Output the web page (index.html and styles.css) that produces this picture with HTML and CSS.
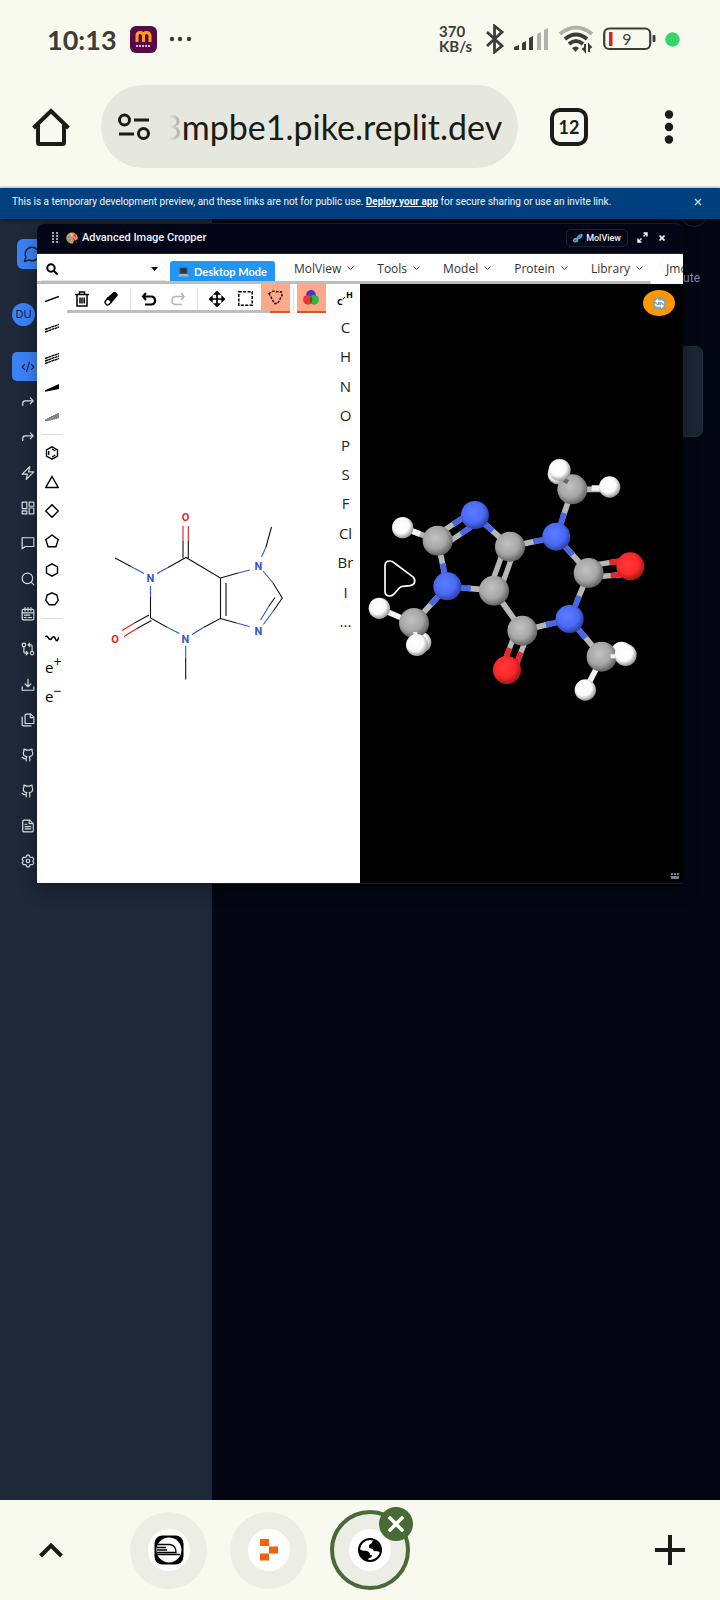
FILE: index.html
```html
<!DOCTYPE html>
<html lang="en">
<head>
<meta charset="utf-8">
<meta name="viewport" content="width=device-width">
<title>Advanced Image Cropper</title>
<link rel="stylesheet" href="styles.css">
</head>
<body>
<header class="chrome">
  <div class="status">
    <span class="clock">10:13</span>
    <svg class="app-icon" width="27" height="27" viewBox="0 0 27 27"><rect width="27" height="27" rx="6" fill="#570a45"/><path d="M7 16V9.500q0-3 3-3t3.500 3V16M13.500 9.500q0-3 3-3t3.500 3V16" fill="none" stroke="#ff9a1f" stroke-width="3"/><path d="M6 20h15" stroke="#d9b5d0" stroke-width="2" stroke-dasharray="2 1"/></svg>
    <svg width="24" height="6" viewBox="0 0 24 6" fill="#3c3d38"><circle cx="3" cy="3" r="2.200"/><circle cx="11" cy="3" r="2.200"/><circle cx="20" cy="3" r="2.200"/></svg>
    <div class="status-right">
      <span class="speed">370<br>KB/s</span>
      <svg width="20" height="30" viewBox="0 0 20 30" fill="none" stroke="#3c3d38" stroke-width="2.800"><path d="M2 8l15 14-7.500 6V2L17 8 2 22"/></svg>
      <svg width="35" height="24" viewBox="0 0 35 24"><g fill="#3c3d38"><path d="M0 23v-3l5-2v5zM8 23v-7l4-2v9zM15 23V11l4-2v14z"/></g><g fill="#b0b1ab"><path d="M23 23V7l4-2v18zM30 23V3l4-2v22z"/></g></svg>
      <svg width="36" height="30" viewBox="0 0 36 30" fill="none"><path d="M2 10Q18-3 34 10" stroke="#b0b1ab" stroke-width="4"/><path d="M7 15q11-9 22 0M11 20q7-6 14 0" stroke="#3c3d38" stroke-width="4"/><path d="M14 24q4-3 7 0l-3.500 4z" fill="#3c3d38"/><path d="M27 20v7l-2.500-3M31 28v-7l2.500 3" stroke="#3c3d38" stroke-width="2"/></svg>
      <svg width="53" height="24" viewBox="0 0 53 24"><rect x="1.200" y="1.500" width="46" height="20.500" rx="5" fill="none" stroke="#3c3d38" stroke-width="2.200"/><rect x="6" y="5" width="3.500" height="14" fill="#d3231e"/><rect x="49.500" y="8" width="3" height="7" rx="1" fill="#3c3d38"/><text x="24" y="18" text-anchor="middle" class="battery">9</text></svg>
      <svg width="15" height="15" viewBox="0 0 15 15"><circle cx="7.500" cy="7.500" r="7.200" fill="#37d36c"/></svg>
    </div>
  </div>
  <div class="toolbar">
    <button class="plain" aria-label="Home"><svg width="38" height="38" viewBox="0 0 38 38" fill="none" stroke="#1a1c17" stroke-width="4"><path d="M1.500 20L19 3l17.500 17M6 17v17.500q0 1.500 1.500 1.500h23q1.500 0 1.500-1.500V17"/></svg></button>
    <div class="address">
      <svg width="32" height="28" viewBox="0 0 32 28" fill="none" stroke="#1a1c17" stroke-width="3"><circle cx="6.500" cy="7" r="5"/><path d="M16 7h15M1 21h15"/><circle cx="25.500" cy="20.500" r="5"/></svg>
      <span class="url"><span class="faded">3</span>mpbe1.pike.replit.dev</span>
    </div>
    <button class="tabs">12</button>
    <button class="plain menu" aria-label="Menu"><svg width="10" height="34" viewBox="0 0 10 34" fill="#1a1c17"><circle cx="5" cy="4.500" r="4.200"/><circle cx="5" cy="17" r="4.200"/><circle cx="5" cy="29.500" r="4.200"/></svg></button>
  </div>
</header>

<div class="page">
  <div class="banner">
    <p>This is a temporary development preview, and these links are not for public use. <a href="#">Deploy your app</a> for secure sharing or use an invite link.</p>
    <button aria-label="Close banner"><svg width="8" height="8" viewBox="0 0 8 8" stroke="#d5e0ee" stroke-width="1.300"><path d="M1 1l6 6M7 1L1 7"/></svg></button>
  </div>
  <div class="shell">
    <aside class="sidebar">
      <div class="logo"><svg class="line" viewBox="0 0 24 24"><path d="M7.900 20A9 9 0 1 0 4 16.100L2 22Z"/></svg></div>
      <div class="avatar">DU</div>
      <nav>
        <button class="active" aria-label="Code"><svg class="line" viewBox="0 0 24 24"><path d="m18 16 4-4-4-4M6 8l-4 4 4 4M14.500 4l-5 16"/></svg></button>
        <button aria-label="Forward"><svg class="line" viewBox="0 0 24 24"><path d="m16 5 5 5-5 5M3 18v-4q0-4 4-4h14"/></svg></button>
        <button aria-label="Redo"><svg class="line" viewBox="0 0 24 24"><path d="m16 5 5 5-5 5M3 18v-4q0-4 4-4h14"/></svg></button>
        <button aria-label="Actions"><svg class="line" viewBox="0 0 24 24"><path d="M15 1L2 14h9l-2 9L22 10h-9z"/></svg></button>
        <button aria-label="Layout"><svg class="line" viewBox="0 0 24 24"><path d="M2 2h8v11H2zM14 2h8v7h-8zM14 12h8v10h-8zM2 17h8v5H2z"/></svg></button>
        <button aria-label="Messages"><svg class="line" viewBox="0 0 24 24"><path d="M2 3h20v15H7l-5 4z"/></svg></button>
        <button aria-label="Search"><svg class="line" viewBox="0 0 24 24"><circle cx="11" cy="11" r="9"/><path d="m22 22-4.500-4.500"/></svg></button>
        <button aria-label="Calendar"><svg class="line" viewBox="0 0 24 24"><rect x="2" y="4" width="20" height="18" rx="2"/><path d="M7 1v6M12 1v6M17 1v6M2 10h20M6 14h9M6 18h3M12 18h6"/></svg></button>
        <button aria-label="Compare"><svg class="line" viewBox="0 0 24 24"><circle cx="5" cy="5" r="3"/><circle cx="19" cy="19" r="3"/><path d="M12 5h5q2 0 2 2v9M15 2l-3 3 3 3M12 19H7q-2 0-2-2V8M9 16l3 3-3 3"/></svg></button>
        <button aria-label="Download"><svg class="line" viewBox="0 0 24 24"><path d="M2 15v6h20v-6M7 10l5 5 5-5M12 15V2"/></svg></button>
        <button aria-label="Copy"><svg class="line" viewBox="0 0 24 24"><path d="M9 2h8l5 5v11H7V4q0-2 2-2M16 2v6h6M2 7v13q0 2 2 2h13"/></svg></button>
        <button aria-label="GitHub"><svg class="line" viewBox="0 0 24 24"><path d="M15 22v-4a5 5 0 0 0-1-3.500c3 0 6-2 6-5.500a5 5 0 0 0-1-3.500V2c-2 0-4 1.500-4 1.500H9S7 2 5 2v3.500A5 5 0 0 0 4 9c0 3.500 3 5.500 6 5.500A5 5 0 0 0 9 18v4M9 18c-4.500 2-5-2-7-2"/></svg></button>
        <button aria-label="Repository"><svg class="line" viewBox="0 0 24 24"><path d="M15 22v-4a5 5 0 0 0-1-3.500c3 0 6-2 6-5.500a5 5 0 0 0-1-3.500V2c-2 0-4 1.500-4 1.500H9S7 2 5 2v3.500A5 5 0 0 0 4 9c0 3.500 3 5.500 6 5.500A5 5 0 0 0 9 18v4M9 18c-4.500 2-5-2-7-2"/></svg></button>
        <button aria-label="Document"><svg class="line" viewBox="0 0 24 24"><path d="M5 2h10l6 6v12q0 2-2 2H5q-2 0-2-2V4q0-2 2-2M14 2v6h7M7 13h10M7 17h10M7 9h3"/></svg></button>
        <button aria-label="Settings"><svg class="line" viewBox="0 0 24 24"><path d="M10 2h4l1 3 2 1 3-.5 2 3.500-2 3 2 3-2 3.500-3-.5-2 1-1 3h-4l-1-3-2-1-3 .5L2 15l2-3-2-3 2-3.500 3 .5 2-1z"/><circle cx="12" cy="12" r="3"/></svg></button>
      </nav>
    </aside>
    <main class="content">
      <span class="round"></span>
      <p>ute</p>
      <div class="card"></div>
    </main>
  </div>

  <section class="dialog">
    <div class="titlebar">
      <svg width="6" height="11" viewBox="0 0 6 11" fill="#9aa3b5"><path d="M0 0h2v2H0zM4 0h2v2H4zM0 3h2v2H0zM4 3h2v2H4zM0 6h2v2H0zM4 6h2v2H4zM0 9h2v2H0zM4 9h2v2H4z"/></svg>
      <svg width="12" height="12" viewBox="0 0 12 12"><path d="M6 .5C2.500.5.300 3 .3 6S3 11.500 6 11.500c2 0 1-2 2-3s3.700.3 3.700-2.500C11.700 2.800 9 .5 6 .5z" fill="#e0936a"/><circle cx="3" cy="5" r="1.200" fill="#3aa6e8"/><circle cx="5.500" cy="2.700" r="1.200" fill="#f4d03f"/><circle cx="8.800" cy="3.500" r="1.200" fill="#d63a3a"/><circle cx="3.500" cy="8.300" r="1.200" fill="#53ad4a"/><path d="M7 6l4 5" stroke="#7a4a2a"/></svg>
      <h1>Advanced Image Cropper</h1>
      <button class="mol-btn"><svg width="10" height="10" viewBox="0 0 10 10" fill="none" stroke-width="1.600"><path d="M.8 8.500Q.5 5 4 5.500T9.200 1.500" stroke="#b77be0"/><path d="M.8 8.500Q5 9.500 4.500 6T9.200 1.500M2 6l2 2M6 2.500l2 2" stroke="#30b9b8"/></svg>MolView</button>
      <button class="plain" aria-label="Expand"><svg width="11" height="11" viewBox="0 0 11 11" fill="none" stroke="#f1f5f9" stroke-width="1.400"><path d="M6.500 1H10v3.500M10 1L6.500 4.500M1 6.500V10h3.500M1 10l3.500-3.500"/></svg></button>
      <button class="plain" aria-label="Close"><svg width="6" height="6" viewBox="0 0 6 6" stroke="#f1f5f9" stroke-width="1.600"><path d="M.5.500l5 5M5.500.500l-5 5"/></svg></button>
    </div>
    <div class="menubar">
      <div class="search">
        <svg width="12" height="12" viewBox="0 0 12 12" fill="none" stroke="#000" stroke-width="2"><circle cx="5" cy="5" r="3.700"/><path d="M7.700 7.700L11.500 11.500"/></svg>
        <input type="text" aria-label="Search molecules">
        <svg width="7" height="4" viewBox="0 0 7 4"><path d="M0 0h7L3.500 4z"/></svg>
      </div>
      <button class="desktop"><svg width="11" height="10" viewBox="0 0 11 10"><path d="M1.500.500h8V7h-8z" fill="#4c5963"/><path d="M2.500 1.500h6V6h-6z" fill="#26353f"/><path d="M1.500 7h8L11 9.500H0z" fill="#a4b1b8"/></svg>Desktop Mode</button>
      <button class="item">MolView<svg width="7" height="5" viewBox="0 0 7 5"><path d="M.5.500l3 3 3-3"/></svg></button>
      <button class="item">Tools<svg width="7" height="5" viewBox="0 0 7 5"><path d="M.5.500l3 3 3-3"/></svg></button>
      <button class="item">Model<svg width="7" height="5" viewBox="0 0 7 5"><path d="M.5.500l3 3 3-3"/></svg></button>
      <button class="item">Protein<svg width="7" height="5" viewBox="0 0 7 5"><path d="M.5.500l3 3 3-3"/></svg></button>
      <button class="item">Library<svg width="7" height="5" viewBox="0 0 7 5"><path d="M.5.500l3 3 3-3"/></svg></button>
      <button class="item">Jmo</button>
    </div>
    <div class="menu-scroll"></div>
    <div class="panes">
      <div class="sketcher">
        <div class="left-tools">
          <div class="group five">
            <button aria-label="Single bond"><svg class="tool" viewBox="0 0 14 14"><path d="M0 9.500L14 4.500"/></svg></button>
            <button aria-label="Double bond"><svg class="tool" viewBox="0 0 14 14"><path d="M0 8.500L14 3.500M0 11L14 6" stroke-dasharray="3 .4"/></svg></button>
            <button aria-label="Triple bond"><svg class="tool" viewBox="0 0 14 14"><path d="M0 7.500L14 2.500M0 10L14 5M0 12.500L14 7.500" stroke-dasharray="3 .4"/></svg></button>
            <button aria-label="Wedge bond"><svg class="tool" viewBox="0 0 14 14"><path d="M0 10L13.500 4v3.500z" fill="#000"/></svg></button>
            <button aria-label="Hash bond"><svg class="tool" viewBox="0 0 14 14"><path d="M1 9v2M3 8v3M5 7v3.500M7 6v4M9 5v4.500M11 4v5M13 3v5.500" stroke="#555"/></svg></button>
          </div>
          <div class="group six">
            <button aria-label="Benzene"><svg class="tool" viewBox="0 0 14 14"><path d="M7 .8l5.500 3v6.400L7 13.200l-5.500-3V3.800zM7 3l3.500 2M3.700 5v4M10.300 9L7 11"/></svg></button>
            <button aria-label="Cyclopropane"><svg class="tool" viewBox="0 0 14 14"><path d="M7 1.500l6.200 11H.8z"/></svg></button>
            <button aria-label="Cyclobutane"><svg class="tool" viewBox="0 0 14 14"><path d="M7 .7L13.300 7 7 13.300.7 7z"/></svg></button>
            <button aria-label="Cyclopentane"><svg class="tool" viewBox="0 0 14 14"><path d="M7 1l6.200 4.600-2.300 7.200H3.100L.8 5.600z"/></svg></button>
            <button aria-label="Cyclohexane"><svg class="tool" viewBox="0 0 14 14"><path d="M7 .8l5.500 3v6.400L7 13.200l-5.500-3V3.800z"/></svg></button>
            <button aria-label="Cycloheptane"><svg class="tool" viewBox="0 0 14 14"><path d="M7 .8l4.900 2.300 1.300 5.300-3.400 4.400H4.200L.8 8.400l1.300-5.300z"/></svg></button>
          </div>
          <div class="group three">
            <button aria-label="Chain"><svg class="tool" viewBox="0 0 14 14"><path d="M0 6q2-2 3.500 1T7 7t3.500 1T14 6" stroke-width="1.600"/></svg></button>
            <button>e<sup>+</sup></button>
            <button>e<sup>−</sup></button>
          </div>
        </div>
        <div class="middle">
          <div class="top-tools">
            <button aria-label="Clear"><svg width="14" height="16" viewBox="0 0 14 16" fill="none" stroke="#000" stroke-width="1.500"><path d="M0 3.500h14M4.500 3V1h5v2M2 4v11h10V4M5 6.500v6M7 6.500v6M9.200 6.500v6"/></svg></button>
            <button aria-label="Erase"><svg width="14" height="14" viewBox="0 0 14 14" stroke="#000" stroke-width="1.500"><path d="M4 6l5.500-5q1-.5 2 0l1 1q1 1 0 2L7 10z" fill="#000"/><path d="M4 6l3.500 4L5 12.500q-1.500 1-2.500 0l-1-1q-1-1.500 0-2.500z" fill="#fff"/></svg></button>
            <i></i>
            <button aria-label="Undo"><svg width="16" height="14" viewBox="0 0 16 14" fill="none" stroke="#000" stroke-width="2.200"><path d="M5 1L2 4.500 5 8M2 4.500h8q4 0 4 4t-4 4H4"/></svg></button>
            <button aria-label="Redo edit"><svg width="16" height="14" viewBox="0 0 16 14" fill="none" stroke="#b5b5b5" stroke-width="1.600"><path d="M11 1l3 3.500L11 8M14 4.500H6q-4 0-4 4t4 4h6"/></svg></button>
            <i></i>
            <button aria-label="Move"><svg width="16" height="16" viewBox="0 0 16 16" stroke="#000" stroke-width="1.700"><path d="M8 2v12M2 8h12"/><path d="M8 .8l2 2H6zM8 15.200l2-2H6zM.8 8l2-2v4zM15.200 8l-2-2v4z"/></svg></button>
            <button aria-label="Rectangle select"><svg width="15" height="15" viewBox="0 0 15 15" fill="none" stroke="#000" stroke-width="1.500" stroke-dasharray="3 1.400"><rect x=".8" y=".8" width="13.400" height="13.400"/></svg></button>
            <button class="on" aria-label="Lasso select"><svg width="15" height="15" viewBox="0 0 15 15" fill="none" stroke="#000" stroke-width="1.400" stroke-dasharray="2.500 1.300"><path d="M1 3.500L5 1.200l8.500.8.500 3.500-4.500 8h-3z"/></svg></button>
            <i class="slim"></i>
            <button class="on" aria-label="Atom colors"><svg width="16" height="15" viewBox="0 0 16 15"><circle cx="8" cy="4.900" r="4.900" fill="#4a35c9"/><circle cx="5" cy="9.800" r="4.900" fill="#ee3333"/><circle cx="11" cy="9.800" r="4.900" fill="#32b83a"/><path d="M8 6q3 3.500 0 7.500-3-4 0-7.500z" fill="#654d20"/></svg></button>
          </div>
          <div class="tool-scroll"></div>
          <svg class="structure" viewBox="67 313 264 570" aria-label="Caffeine structure">
            <g fill="none" stroke="#111" stroke-width="1.100"><path d="M115 558l16 8.500M168 567.500l18-10 34.500 20.500v40.500l-17 9M220.500 578l17.500-5M226 583v33M220.500 618.500l16 4.500M150.500 597v21l17 9.500M185.700 658v21.500M266 547l5.500-20M273 583l9.300 15-9 13M275 597.500l-6 8.500M183 541v17M188.300 541v17M149 615l-14.500 8M151.500 620.500l-14.500 8"/></g>
            <g fill="none" stroke="#3355cc" stroke-width="1.100"><path d="M131 566.500l13 7M157 573.500l11-6M238 573l12-3M263 571l10 12M261.500 557l4.500-10M236.500 623l13 3.500M273.300 611l-10 13.500M269 606l-8.500 14M150.500 586v11M167.500 627.500l12 6M192 634.500l11.500-7M185.700 646v12"/></g>
            <g fill="none" stroke="#dd2222" stroke-width="1.100"><path d="M183 526v15M188.300 526v15M134.500 623l-12.500 7.500M137 628.500l-13 8"/></g>
            <g class="atoms"><text x="150.500" y="582">N</text><text x="258.500" y="570">N</text><text x="258.500" y="635">N</text><text x="185.500" y="643">N</text><g class="oxygen"><text x="185.500" y="521">O</text><text x="115" y="643">O</text></g></g>
          </svg>
        </div>
        <div class="elements">
          <button aria-label="Toggle hydrogens"><svg width="24" height="18" viewBox="0 0 24 18"><text x="3" y="16" class="ch">C</text><text x="12" y="9" class="ch">H</text><path d="M9 10l2-2" stroke="#000"/></svg></button>
          <div class="element-list">
            <button>C</button><button>H</button><button>N</button><button>O</button><button>P</button><button>S</button><button>F</button><button>Cl</button><button>Br</button><button>I</button><button>...</button>
          </div>
        </div>
      </div>
      <div class="viewer">
        <svg class="model" viewBox="360 284 323 599" aria-label="Caffeine model">
          <defs>
            <radialGradient id="c" cx=".42" cy=".4" r=".62"><stop offset="0" stop-color="#c2c2c2"/><stop offset=".6" stop-color="#a6a6a6"/><stop offset="1" stop-color="#5e5e5e"/></radialGradient>
            <radialGradient id="n" cx=".42" cy=".4" r=".62"><stop offset="0" stop-color="#5c7cff"/><stop offset=".6" stop-color="#4b6bf8"/><stop offset="1" stop-color="#2a40a0"/></radialGradient>
            <radialGradient id="o" cx=".42" cy=".4" r=".62"><stop offset="0" stop-color="#ff3838"/><stop offset=".6" stop-color="#fb2a2a"/><stop offset="1" stop-color="#a31515"/></radialGradient>
            <radialGradient id="h" cx=".42" cy=".4" r=".62"><stop offset="0" stop-color="#fff"/><stop offset=".6" stop-color="#fafafa"/><stop offset="1" stop-color="#909090"/></radialGradient>
          </defs>
          <g transform="translate(360 440) scale(.3333)">
            <g stroke-width="17" stroke="#b8b8b8"><path d="M345 225L450 320M233 302L262 439M262 439L402 452M450 320L589 290M589 290L637 148M589 290L686 399M686 399L629 537M629 537L487 572M487 572L402 452M629 537L725 650M262 439L162 549M637 148H749M233 302L128 263"/><path d="M223 290L335 216M246 320L358 244M438 312L390 444M465 326L418 458M686 378L811 358M686 412L811 402M472 565L426 683M506 576L460 698" stroke-width="16"/></g>
            <g stroke-width="17" stroke="#4867e6"><path d="M345 225L398 273M248 371L262 439L332 446M520 305L589 290L613 219M589 290L638 345M658 468L629 537L558 555M629 537L677 594M262 439L212 494"/><path d="M279 253L335 216M302 282L358 244" stroke-width="16"/></g>
            <g stroke-width="16" stroke="#e52929"><path d="M748 368L811 358M752 407L811 402M449 624L426 683M483 637L460 698"/></g>
            <g stroke="#f3f3f3" stroke-width="17"><path d="M695 144H749M180 282L128 263M58 505L125 534M676 750L708 688"/></g>
            <g fill="url(#h)"><circle cx="594" cy="102" r="31"/><circle cx="785" cy="637" r="32"/><circle cx="182" cy="607" r="32"/></g>
            <g fill="url(#c)"><circle cx="233" cy="302" r="45"/><circle cx="402" cy="452" r="45"/><circle cx="450" cy="320" r="45"/><circle cx="637" cy="148" r="45"/><circle cx="686" cy="399" r="45"/><circle cx="487" cy="572" r="45"/><circle cx="725" cy="650" r="45"/><circle cx="162" cy="549" r="45"/></g>
            <g fill="url(#n)"><circle cx="345" cy="225" r="42"/><circle cx="262" cy="439" r="42"/><circle cx="589" cy="290" r="42"/><circle cx="629" cy="537" r="42"/></g>
            <g fill="url(#o)"><circle cx="811" cy="379" r="42"/><circle cx="441" cy="690" r="42"/></g>
            <path d="M612 120l12 6" stroke="#666" stroke-width="14"/><path d="M752 649h22M166 576v14" stroke="#f3f3f3" stroke-width="12"/>
            <g fill="url(#h)"><circle cx="128" cy="263" r="32"/><circle cx="599" cy="90" r="33"/><circle cx="749" cy="141" r="32"/><circle cx="797" cy="645" r="33"/><circle cx="676" cy="750" r="32"/><circle cx="58" cy="505" r="32"/><circle cx="171" cy="615" r="33"/></g>
            <path d="M75 376q1-13 14-13 7 0 14 6l55 41q8 6 6 17-2 8-14 10l-22 2q-5 0-9 4l-18 20q-6 6-14 5-12-1-12-14z" fill="none" stroke="#fff" stroke-width="5"/>
          </g>
          <path d="M671 873h2v2h-2zM674 873h2v2h-2zM677 873h2v2h-2zM671 876h8v3h-8z" fill="#777e92"/>
        </svg>
        <button class="refresh" aria-label="Refresh"><svg width="13" height="13" viewBox="0 0 13 13"><rect width="13" height="13" rx="1" fill="#85a5b3"/><path d="M4 4.200h4.500q2 0 2 2.300M9 9H4.500q-2 0-2-2.300" fill="none" stroke="#fff" stroke-width="1.500"/><path d="M5 1.500v5.400L2 4.200zM8 6.300v5.400L11 9z" fill="#fff"/></svg></button>
      </div>
    </div>
  </section>
</div>

<footer class="bottom">
  <button class="plain" aria-label="Show tabs"><svg width="24" height="16" viewBox="0 0 24 16" fill="none" stroke="#1a1c17" stroke-width="4"><path d="M1.500 14L12 3.500 22.500 14"/></svg></button>
  <div class="tab-strip">
    <button class="tab" aria-label="Train tab"><span><svg width="30" height="30" viewBox="0 0 30 30"><rect x=".5" y=".5" width="29" height="29" rx="8"/><circle cx="15" cy="15" r="12.500" fill="#fff"/><path d="M4 9.500h12q6 1 6 8H3M3 12.500h9M3 15h10M3 19.500h23" fill="none" stroke="#000" stroke-width="1.300"/></svg></span></button>
    <button class="tab" aria-label="Replit tab"><span><svg width="18" height="22" viewBox="0 0 18 22" fill="#f26207"><path d="M0 0h9v7H0zM9 7.500h9v7H9zM0 14.500h9v7H0z"/></svg></span></button>
    <button class="tab current" aria-label="Current tab"><span><svg width="24" height="24" viewBox="0 0 24 24"><circle cx="12" cy="12" r="11" fill="#fff" stroke="#000" stroke-width="2"/><path d="M16 2q-2 1-2 3l-3 2v3l4 1q0 3 3 2l4 1q1-8-6-12zM1 11q3 2 8 2 3 1 3 4h2q0 3-3 3l-2 3Q1 20 1 11z"/></svg></span><b class="badge"><svg width="16" height="16" viewBox="0 0 16 16" stroke="#fff" stroke-width="3.600" stroke-linecap="round"><path d="M2 2l12 12M14 2L2 14"/></svg></b></button>
  </div>
  <button class="plain" aria-label="New tab"><svg width="30" height="30" viewBox="0 0 30 30" stroke="#1a1c17" stroke-width="4"><path d="M15 0v30M0 15h30"/></svg></button>
</footer>
</body>
</html>
```
FILE: styles.css
```css
* { box-sizing: border-box; }
body { margin: 0; min-height: 100vh; display: flex; flex-direction: column; background: #020713; font-family: Roboto, sans-serif; }
button { font: inherit; color: inherit; border: 0; padding: 0; margin: 0; background: none; }
svg { display: block; flex-shrink: 0; }
p, h1 { margin: 0; }
.plain { display: grid; place-items: center; }

.chrome { height: 188px; background: #f8faf0; border-bottom: 2px solid #dfe7de; color: #1a1c17; }
.status { display: flex; align-items: center; height: 78px; padding: 0 40px 0 47px; color: #3c3d38; }
.clock { font: 700 27px Lato, sans-serif; width: 83px; }
.app-icon { margin-right: 12px; }
.status-right { margin-left: auto; display: flex; align-items: center; gap: 9px; }
.speed { font: 700 15px/15px Lato, sans-serif; width: 37px; }
.battery { font: 400 16px Lato, sans-serif; fill: #3c3d38; }
.toolbar { display: flex; align-items: center; padding: 7px 46px 0 32px; }
.address { flex: 1; display: flex; align-items: center; height: 83px; margin: 0 32px 0 31px; padding: 0 16px 0 17px; border-radius: 42px; background: #e6e8df; overflow: hidden; }
.url { flex: 1; display: flex; justify-content: flex-end; margin-left: 12px; font: 400 34px/50px Lato, sans-serif; white-space: nowrap; }
.faded { color: transparent; background: linear-gradient(90deg, #e6e8df 35%, #a0a29b); background-clip: text; -webkit-background-clip: text; }
.tabs { width: 38px; height: 38px; border: 4px solid #1a1c17; border-radius: 10px; font: 700 18px Lato, sans-serif; }
.menu { margin-left: 76px; }

.page { position: relative; flex: 1; display: flex; flex-direction: column; }
.banner { display: flex; justify-content: space-between; height: 31px; padding: 0 18px 4px 12px; align-items: center; background: #00407f; color: #f1f6fb; box-shadow: 0 1px 3px #000a; z-index: 1; }
.banner p { font-size: 10px; white-space: nowrap; }
.banner a { color: inherit; font-weight: 700; }
.shell { flex: 1; display: flex; }
.sidebar { width: 212px; background: #1e2839; padding: 20px 0 0 12px; }
.logo { width: 60px; height: 30px; margin-left: 5px; border-radius: 6px; background: #3b82f6; color: #14233f; display: flex; align-items: center; padding-left: 6px; }
.avatar { width: 23px; height: 23px; margin: 34px 0 26px; border-radius: 50%; background: #3b82f6; color: #14233f; font: 11px/23px Inter, sans-serif; text-align: center; }
.line { width: 14px; height: 14px; fill: none; stroke: currentColor; stroke-width: 2; stroke-linejoin: round; stroke-linecap: round; }
.logo .line { width: 18px; height: 18px; }
nav { height: 524px; display: flex; flex-direction: column; justify-content: space-between; color: #e2e8f0; margin-right: 12px; }
nav button { height: 29px; padding-left: 9px; border-radius: 5px; }
nav .active { background: #3b82f6; color: #10203c; }
.content { flex: 1; display: flex; flex-direction: column; align-items: flex-end; color: #8791a3; font-size: 12px; padding-right: 17px; }
.round { width: 28px; height: 28px; margin: -20px -5px 0 0; border: 1px solid #1c2434; border-radius: 50%; }
.content p { margin: 44px 3px 0 0; }
.card { width: 400px; max-width: 100%; height: 91px; margin-top: 61px; border: 1px solid #222d3d; border-radius: 7px; background: #1c2534; }

.dialog { position: absolute; top: 35px; left: 37px; right: 37px; display: flex; flex-direction: column; background: #020617; border: 1px solid #151c2b; border-width: 1px 0; border-radius: 8px 8px 0 0; overflow: hidden; box-shadow: 0 6px 18px #0005; z-index: 2; }
.titlebar { display: flex; align-items: center; height: 30px; padding: 0 15px 2px 15px; color: #f1f5f9; border-bottom: 1px solid #1b2333; }
.titlebar h1 { font: 500 11px Roboto, sans-serif; margin: 0 auto 0 4px; }
.titlebar > svg:first-child { margin-right: 8px; }
.mol-btn { display: flex; align-items: center; gap: 3px; height: 18px; padding: 0 6px; margin-right: 0; border: 1px solid #1b2333; border-radius: 5px; font: 500 9px Roboto, sans-serif; }
.titlebar .plain { width: 12px; height: 12px; margin-left: 8px; }
.menubar { display: flex; align-items: center; height: 27px; background: #fff; color: #333; overflow: hidden; padding-left: 4px; }
.search { flex: none; display: flex; align-items: center; width: 125px; height: 27px; padding: 3px 8px 0 5px; border-bottom: 1px solid #e3e3e3; }
.search input { flex: 1; min-width: 0; border: 0; outline: 0; background: none; }
.desktop { flex: none; display: flex; align-items: center; justify-content: center; gap: 5px; width: 105px; height: 21px; margin: 8px 19px 0 4px; border-radius: 3px 3px 0 0; background: #2196f3; color: #fff; font: 700 11px Lato, sans-serif; }
.item { flex: none; display: flex; align-items: center; gap: 6px; margin: 2px 23px 0 0; font: 12px "Open Sans", sans-serif; }
.item svg { fill: none; stroke: #333; }
.menu-scroll { height: 3px; background: linear-gradient(#bdbdbd 0 0) 0 0 / 95% 100% no-repeat #fff; }
.panes { display: grid; grid-template-columns: 1fr 1fr; }
.sketcher { display: grid; grid-template-columns: 30px 1fr 29px; background: #fff; color: #000; }
.left-tools { padding: 0 4px; }
.group { display: grid; grid-auto-rows: 1fr; padding-left: 4px; font: 15px "Open Sans", sans-serif; }
.group + .group { border-top: 1px solid #ddd; }
.group button { display: flex; align-items: center; }
.group sup { font-size: 14px; line-height: 1; align-self: flex-start; padding-top: 3px; }
.five { height: 148px; margin-bottom: 2px; }
.six { height: 184px; padding-top: 3px; padding-bottom: 4px; }
.three { height: 92px; padding-top: 4px; }
.tool { width: 14px; height: 14px; fill: none; stroke: #000; stroke-width: 1.4; }
.middle { min-width: 0; display: flex; flex-direction: column; }
.top-tools { display: flex; height: 26px; padding-right: 5px; }
.top-tools button { flex: 1 1 0; height: 29px; display: grid; place-items: center; }
.top-tools .on { background: #ffa98a; border-bottom: 2px solid #d8572a; }
.top-tools i { flex: none; width: 1px; height: 22px; margin: 4px 4px 0; background: #ddd; }
.top-tools .slim { margin: 4px 3px 0; }
.tool-scroll { height: 3px; width: 77%; background: #bdbdbd; }
.structure { width: 100%; height: auto; }
.atoms { font: 700 11px Roboto, sans-serif; fill: #3652c8; text-anchor: middle; }
.oxygen { fill: #df2929; }
.elements { font: 15px "Open Sans", sans-serif; color: #222; }
.elements > button { display: grid; place-items: center; width: 100%; height: 28px; }
.ch { font: 700 9px "Open Sans", sans-serif; }
.element-list { display: grid; grid-auto-rows: 1fr; height: 324px; }
.viewer { position: relative; background: #000; }
.model { width: 100%; height: auto; }
.refresh { position: absolute; top: 6px; right: 8px; width: 32px; height: 26px; border-radius: 50%; background: #ff9800; display: grid; place-items: center; }

.bottom { display: flex; align-items: center; height: 100px; padding: 0 35px 0 39px; background: #f8faf0; }
.tab-strip { display: flex; align-items: center; gap: 23px; margin: 0 auto 0 67px; }
.tab { position: relative; width: 77px; height: 77px; border-radius: 50%; background: #eceee5; display: grid; place-items: center; }
.tab span { width: 42px; height: 42px; border-radius: 50%; background: #fff; display: grid; place-items: center; }
.current { width: 80px; height: 80px; border: 4px solid #486a36; }
.badge { position: absolute; top: -7px; right: -7px; width: 34px; height: 34px; border-radius: 50%; background: #486a36; display: grid; place-items: center; }
```
